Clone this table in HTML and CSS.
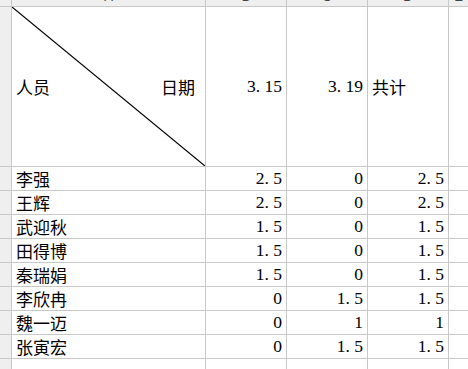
FILE: index.html
```html
<!DOCTYPE html>
<html lang="zh">
<head>
<meta charset="utf-8">
<link rel="stylesheet" href="styles.css">
</head>
<body>
<div class="sheet">
  <div class="hd corner"></div>
  <div class="hd col"><span>A</span></div>
  <div class="hd col"><span>B</span></div>
  <div class="hd col"><span>C</span></div>
  <div class="hd col"><span>D</span></div>
  <div class="hd col"><span>E</span></div>

  <div class="rh"></div>
  <div class="cell head-a">
    <svg class="diag" viewBox="0 0 193 159" preserveAspectRatio="none"><line x1="0" y1="0" x2="193" y2="159" stroke="#000" stroke-width="1.2"/></svg>
    <span class="zh">人员</span><span class="zh">日期</span>
  </div>
  <div class="cell tall num r">3<span class="dot">.</span>15</div>
  <div class="cell tall num r">3<span class="dot">.</span>19</div>
  <div class="cell tall zh">共计</div>
  <div class="cell tall"></div>

  <div class="rh"></div><div class="cell zh">李强</div><div class="cell num r">2<span class="dot">.</span>5</div><div class="cell num r">0</div><div class="cell num r">2<span class="dot">.</span>5</div><div class="cell"></div>
  <div class="rh"></div><div class="cell zh">王辉</div><div class="cell num r">2<span class="dot">.</span>5</div><div class="cell num r">0</div><div class="cell num r">2<span class="dot">.</span>5</div><div class="cell"></div>
  <div class="rh"></div><div class="cell zh">武迎秋</div><div class="cell num r">1<span class="dot">.</span>5</div><div class="cell num r">0</div><div class="cell num r">1<span class="dot">.</span>5</div><div class="cell"></div>
  <div class="rh"></div><div class="cell zh">田得博</div><div class="cell num r">1<span class="dot">.</span>5</div><div class="cell num r">0</div><div class="cell num r">1<span class="dot">.</span>5</div><div class="cell"></div>
  <div class="rh"></div><div class="cell zh">秦瑞娟</div><div class="cell num r">1<span class="dot">.</span>5</div><div class="cell num r">0</div><div class="cell num r">1<span class="dot">.</span>5</div><div class="cell"></div>
  <div class="rh"></div><div class="cell zh">李欣冉</div><div class="cell num r">0</div><div class="cell num r">1<span class="dot">.</span>5</div><div class="cell num r">1<span class="dot">.</span>5</div><div class="cell"></div>
  <div class="rh"></div><div class="cell zh">魏一迈</div><div class="cell num r">0</div><div class="cell num r">1</div><div class="cell num r">1</div><div class="cell"></div>
  <div class="rh"></div><div class="cell zh">张寅宏</div><div class="cell num r">0</div><div class="cell num r">1<span class="dot">.</span>5</div><div class="cell num r">1<span class="dot">.</span>5</div><div class="cell"></div>
  <div class="rh"></div><div class="cell"></div><div class="cell"></div><div class="cell"></div><div class="cell"></div><div class="cell"></div>
</div>
</body>
</html>
```

FILE: styles.css
```css
html, body {
  margin: 0;
  padding: 0;
  background: #fff;
  overflow: hidden;
}
.sheet {
  width: 468px;
  height: 369px;
  display: grid;
  grid-template-columns: 11px 193px 80px 80px 80px 1fr;
  grid-template-rows: 6px 159px repeat(8, 23px) 1fr;
  gap: 1px;
  background: #c8c8c8;
  overflow: hidden;
  font-family: "Noto Sans CJK SC", sans-serif;
  color: #000;
}
.hd {
  background: #efefef;
  overflow: hidden;
}
.col {
  display: flex;
  justify-content: center;
  align-items: flex-start;
  font-family: "Liberation Sans", sans-serif;
  font-size: 13px;
  line-height: 13px;
  color: #444;
}
.col span {
  margin-top: -10px;
}
.rh {
  background: #efefef;
}
.cell {
  background: #fff;
  display: flex;
  align-items: flex-end;
  padding: 0 4px 1px 4px;
  font-size: 17px;
  line-height: 21px;
  white-space: nowrap;
  overflow: hidden;
}
.tall {
  align-items: center;
  padding-bottom: 0;
}
.r {
  justify-content: flex-end;
}
.num {
  font-family: "Liberation Serif", serif;
  font-size: 17.5px;
}
.dot {
  display: inline-block;
  width: 0.5em;
}
.zh {
  font-family: "Noto Sans CJK SC", sans-serif;
  font-size: 17px;
}
.head-a {
  position: relative;
  align-items: center;
  justify-content: space-between;
  padding: 0 10px 0 4px;
}
.diag {
  position: absolute;
  left: 0;
  top: 0;
  width: 100%;
  height: 100%;
}
```
